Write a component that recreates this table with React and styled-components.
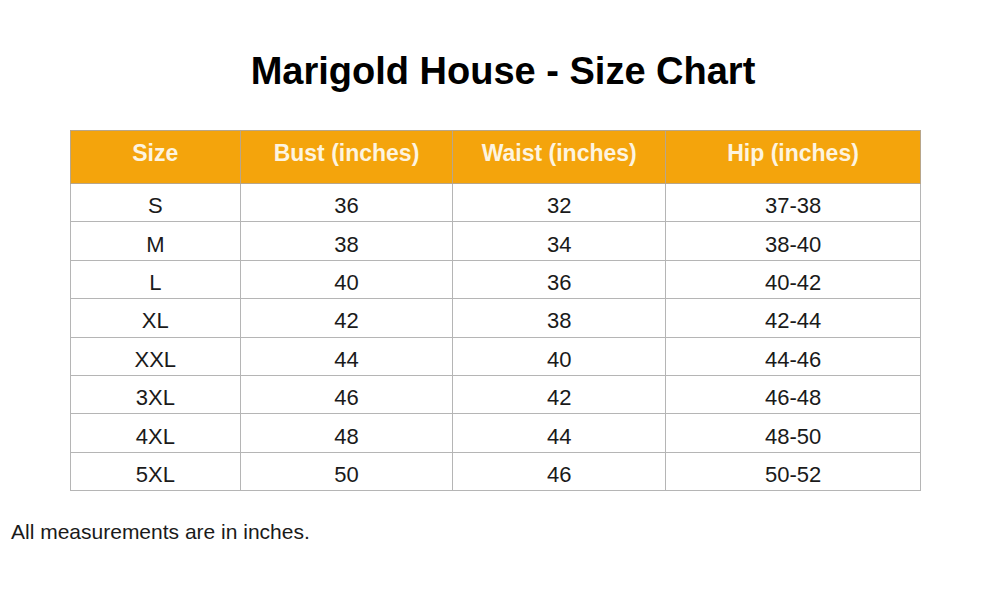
import React from 'react';
import styled, { createGlobalStyle } from 'styled-components';

const GlobalStyle = createGlobalStyle`
  body {
    margin: 0;
    background: #ffffff;
    font-family: 'Liberation Sans', Arial, sans-serif;
    color: #111111;
  }
`;

const Page = styled.div`
  width: 1006px;
  height: 595px;
  padding-top: 47px;
  box-sizing: border-box;
`;

const Title = styled.h1`
  margin: 0;
  text-align: center;
  font-size: 38px;
  line-height: 48px;
  font-weight: bold;
  color: #000000;
`;

const Chart = styled.table`
  margin: 35px 0 0 70px;
  width: 851px;
  border-collapse: collapse;
  table-layout: fixed;
`;

const HeadCell = styled.th`
  width: ${(p) => p.w}px;
  height: 53px;
  padding: 0 0 8px;
  box-sizing: border-box;
  background: #f4a40c;
  color: #fdf4e0;
  font-size: 23px;
  font-weight: bold;
  text-align: center;
  border: 1px solid #b8a68a;
`;

const Cell = styled.td`
  height: 38.4px;
  padding: 7px 0 0;
  box-sizing: border-box;
  font-size: 22px;
  line-height: 26px;
  text-align: center;
  color: #1a1a1a;
  border: 1px solid #b5b5b5;
`;

const Note = styled.p`
  margin: 29px 0 0 11px;
  font-size: 21px;
  line-height: 24px;
  color: #1a1a1a;
`;

const columns = [
  { label: 'Size', w: 169 },
  { label: 'Bust (inches)', w: 212 },
  { label: 'Waist (inches)', w: 212 },
  { label: 'Hip (inches)', w: 254 },
];

const rows = [
  ['S', '36', '32', '37-38'],
  ['M', '38', '34', '38-40'],
  ['L', '40', '36', '40-42'],
  ['XL', '42', '38', '42-44'],
  ['XXL', '44', '40', '44-46'],
  ['3XL', '46', '42', '46-48'],
  ['4XL', '48', '44', '48-50'],
  ['5XL', '50', '46', '50-52'],
];

export default function App() {
  return (
    <Page>
      <GlobalStyle />
      <Title>Marigold House - Size Chart</Title>
      <Chart>
        <thead>
          <tr>
            {columns.map((c) => (
              <HeadCell key={c.label} w={c.w}>{c.label}</HeadCell>
            ))}
          </tr>
        </thead>
        <tbody>
          {rows.map((r) => (
            <tr key={r[0]}>
              {r.map((v, i) => (
                <Cell key={i}>{v}</Cell>
              ))}
            </tr>
          ))}
        </tbody>
      </Chart>
      <Note>All measurements are in inches.</Note>
    </Page>
  );
}
